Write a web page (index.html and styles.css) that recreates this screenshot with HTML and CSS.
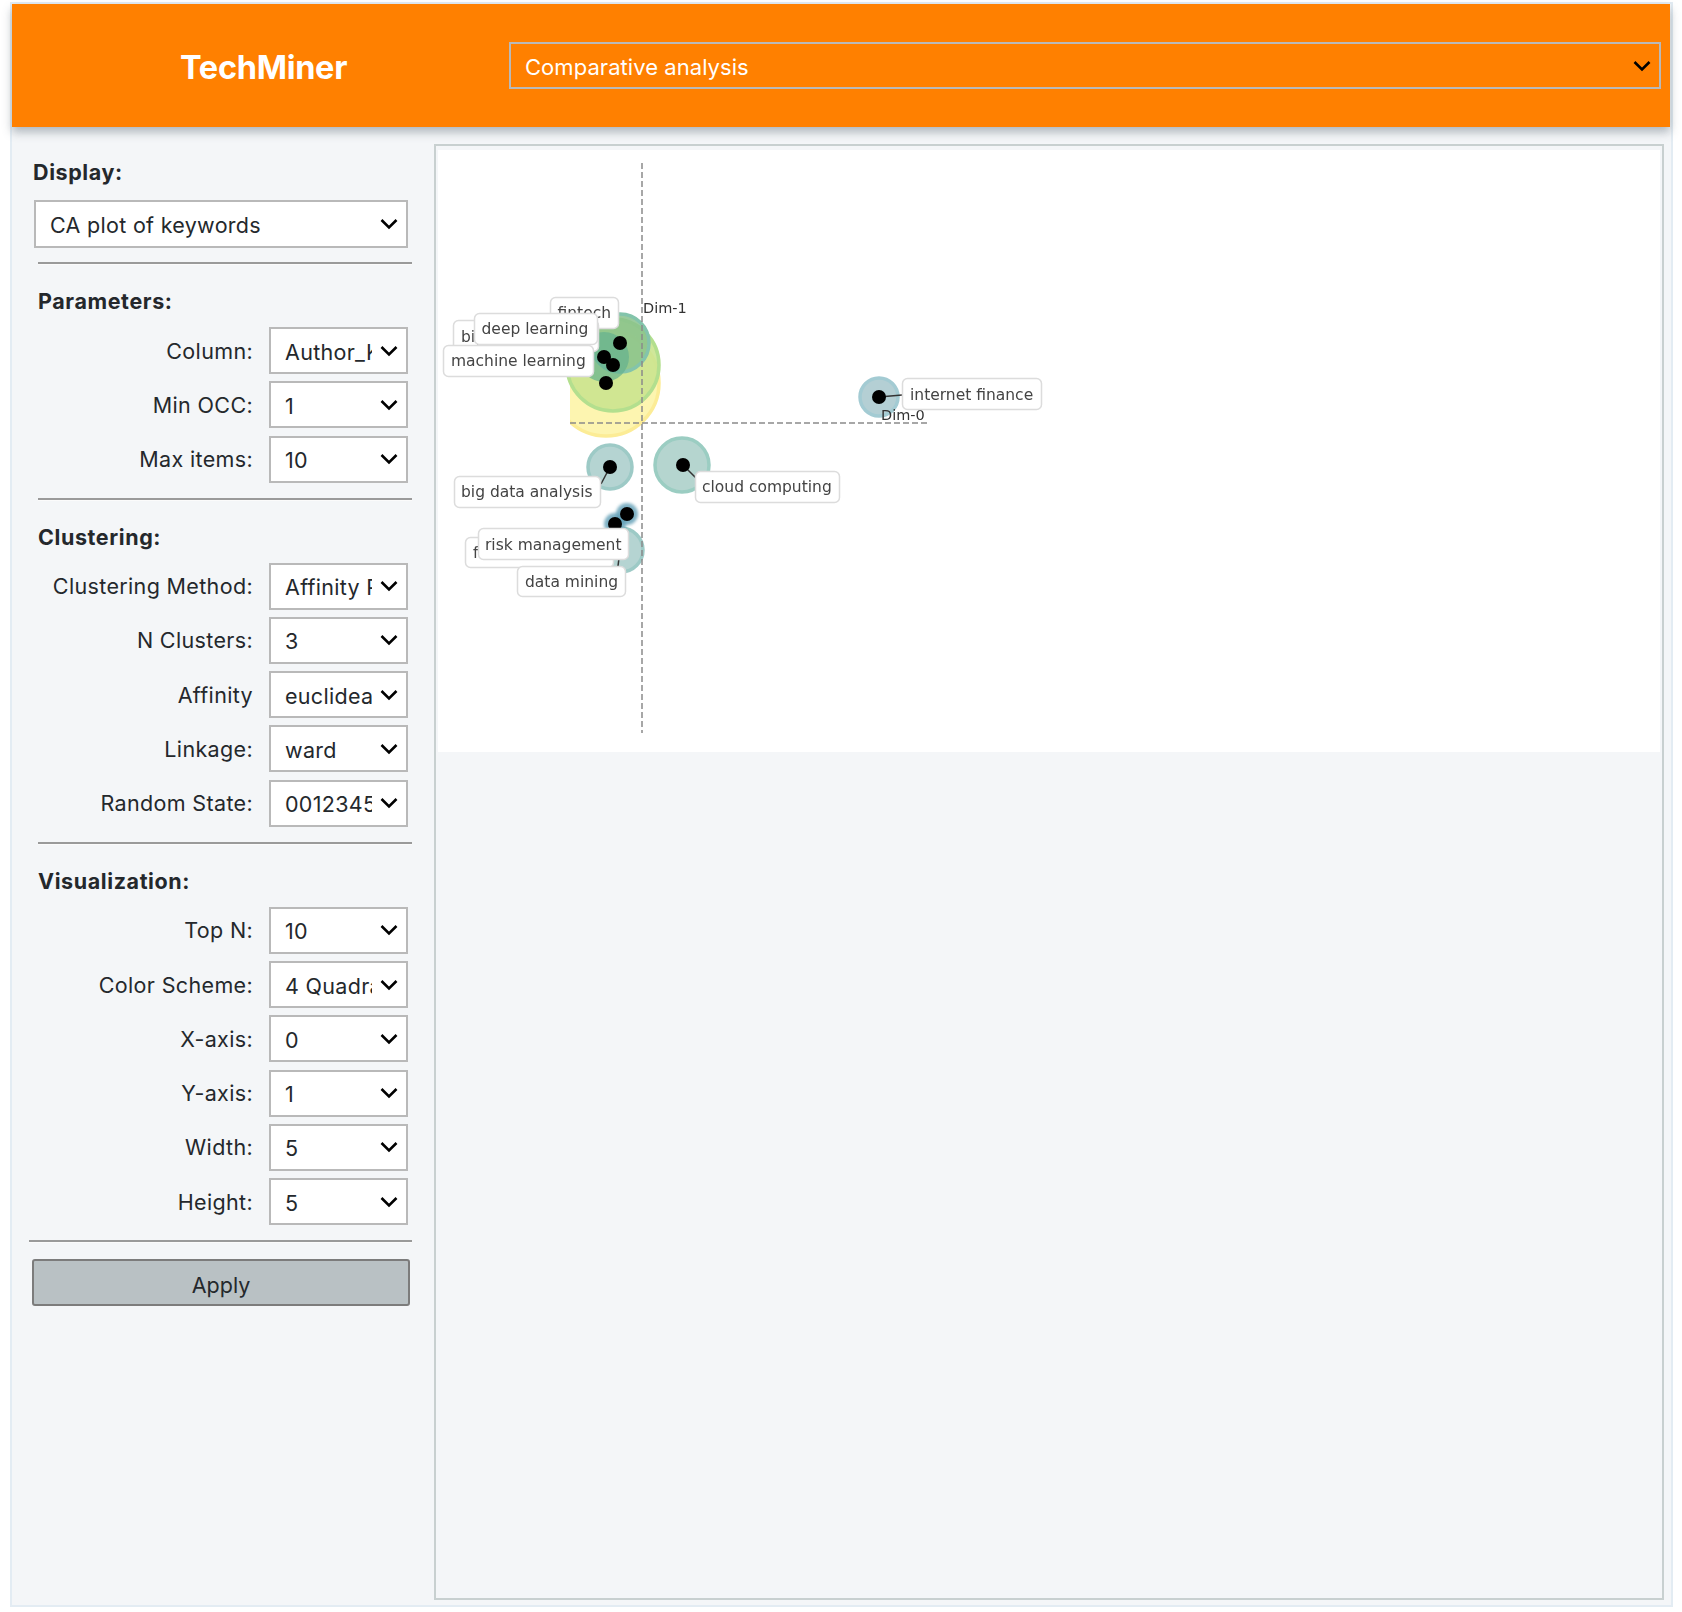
FILE: index.html
```html
<!DOCTYPE html>
<html lang="en">
<head>
  <meta charset="UTF-8" />
  <title>TechMiner</title>
  <link rel="stylesheet" href="styles.css">
</head>
<body>
  <div class="frame">
    <header class="topbar">
      <div class="brand">TechMiner</div>
      <select class="app-select">
        <option>Comparative analysis</option>
      </select>
    </header>

    <div class="content">
      <aside class="sidebar">
        <div class="display-label">Display:</div>
        <select class="display-select">
          <option>CA plot of keywords</option>
        </select>
        <hr class="rule" />

        <div class="section-title">Parameters:</div>
        <div class="fields">
          <label class="field"><span>Column:</span><select><option>Author_Keywords</option></select></label>
          <label class="field"><span>Min OCC:</span><select><option>1</option></select></label>
          <label class="field"><span>Max items:</span><select><option>10</option></select></label>
        </div>
        <hr class="rule" />

        <div class="section-title">Clustering:</div>
        <div class="fields">
          <label class="field"><span>Clustering Method:</span><select><option>Affinity Propagation</option></select></label>
          <label class="field"><span>N Clusters:</span><select><option>3</option></select></label>
          <label class="field"><span>Affinity</span><select><option>euclidean</option></select></label>
          <label class="field"><span>Linkage:</span><select><option>ward</option></select></label>
          <label class="field"><span>Random State:</span><select><option>0012345678</option></select></label>
        </div>
        <hr class="rule" />

        <div class="section-title">Visualization:</div>
        <div class="fields">
          <label class="field"><span>Top N:</span><select><option>10</option></select></label>
          <label class="field"><span>Color Scheme:</span><select><option>4 Quadrants</option></select></label>
          <label class="field"><span>X-axis:</span><select><option>0</option></select></label>
          <label class="field"><span>Y-axis:</span><select><option>1</option></select></label>
          <label class="field"><span>Width:</span><select><option>5</option></select></label>
          <label class="field"><span>Height:</span><select><option>5</option></select></label>
        </div>
        <hr class="rule rule-wide" />

        <button class="apply">Apply</button>
      </aside>

      <main class="output">
        <div class="plot">
          <!-- viewBox is the page area of the plot, so coordinates read like the picture -->
          <svg class="plot-svg" viewBox="438 150 1222 602" width="1222" height="602">
            <defs>
              <clipPath id="axes"><rect x="570" y="150" width="1090" height="602" /></clipPath>
            </defs>

            <g clip-path="url(#axes)">
              <circle cx="606" cy="383" r="53" fill="#fdf5b0" stroke="#fcec96" stroke-width="3.5" />
            </g>
            <circle cx="613" cy="365" r="46" fill="#cbe48f" fill-opacity="0.9" stroke="#b3df8e" stroke-width="3.5" />
            <circle cx="620" cy="343" r="29" fill="#88c28c" fill-opacity="0.85" stroke="#83c4ab" stroke-width="3.5" />
            <circle cx="604" cy="357" r="25" fill="#64b08e" fill-opacity="0.7" />

            <circle cx="682" cy="465" r="27" fill="#b5d5cf" stroke="#9bcdc2" stroke-width="3.5" />
            <circle cx="879" cy="397" r="19" fill="#b4cfd4" stroke="#a3cbd3" stroke-width="3.5" />
            <circle cx="610" cy="467" r="22" fill="#b5d4d2" stroke="#9dcac6" stroke-width="3.5" />
            <circle cx="621" cy="550" r="22" fill="#b5d4d2" stroke="#9dcac6" stroke-width="3.5" />
            <circle class="halo" cx="627" cy="514" r="11" />
            <circle class="halo" cx="615" cy="524" r="11" />

            <g class="axis">
              <line x1="642" y1="163" x2="642" y2="733" />
              <line x1="570" y1="423" x2="927" y2="423" />
            </g>

            <g class="leaders">
              <line x1="610" y1="467" x2="601" y2="484" />
              <line x1="683" y1="465" x2="697" y2="479" />
              <line x1="879" y1="397" x2="902" y2="395" />
              <line x1="620" y1="550" x2="618" y2="566" />
            </g>

            <g class="dots">
              <circle cx="620" cy="343" r="7" />
              <circle cx="604" cy="357" r="7" />
              <circle cx="613" cy="365" r="7" />
              <circle cx="606" cy="383" r="7" />
              <circle cx="610" cy="467" r="7" />
              <circle cx="683" cy="465" r="7" />
              <circle cx="879" cy="397" r="7" />
              <circle cx="627" cy="514" r="7" />
              <circle cx="615" cy="524" r="7" />
            </g>

            <text class="dim" x="643" y="313">Dim-1</text>
            <text class="dim" x="881" y="420">Dim-0</text>

            <g class="tag"><rect x="550.5" y="297.5" width="68" height="31" rx="5" /><text x="557.5" y="318">fintech</text></g>
            <g class="tag"><rect x="453.5" y="320.5" width="145" height="31" rx="5" /><text x="461" y="342">big data</text></g>
            <g class="tag"><rect x="474.5" y="313.5" width="123" height="31" rx="5" /><text x="481.5" y="334">deep learning</text></g>
            <g class="tag"><rect x="443.5" y="345.5" width="150" height="31" rx="5" /><text x="451" y="366">machine learning</text></g>
            <g class="tag"><rect x="902.5" y="378.5" width="139" height="31" rx="5" /><text x="910" y="400">internet finance</text></g>
            <g class="tag"><rect x="695.5" y="471.5" width="144" height="31" rx="5" /><text x="702" y="492">cloud computing</text></g>
            <g class="tag"><rect x="454.5" y="476.5" width="146" height="31" rx="5" /><text x="461" y="497">big data analysis</text></g>
            <g class="tag"><rect x="465.5" y="537.5" width="148" height="30" rx="5" /><text x="473" y="558">financial</text></g>
            <g class="tag"><rect x="478.5" y="528.5" width="150" height="31" rx="5" /><text x="485" y="550">risk management</text></g>
            <g class="tag"><rect x="517.5" y="566.5" width="108" height="30" rx="5" /><text x="525" y="587">data mining</text></g>
          </svg>
        </div>
      </main>
    </div>
  </div>
</body>
</html>
```

FILE: styles.css
```css
* {
  box-sizing: border-box;
}

body {
  margin: 0;
  background: #fff;
  font-family: Inter, "Liberation Sans", sans-serif;
  color: #24282c;
}

.frame {
  width: 1663px;
  height: 1605px;
  margin: 2px 0 0 10px;
  border: 2px solid #e3ecf3;
  background: #f4f6f8;
  display: flex;
  flex-direction: column;
}

.topbar {
  height: 123px;
  flex-shrink: 0;
  background: #ff8000;
  box-shadow: 0 5px 9px rgba(90, 105, 115, 0.45);
  display: flex;
  align-items: center;
  position: relative;
  margin-right: 1px;
  padding-left: 168px;
  padding-right: 9px;
}

.brand {
  width: 329px;
  margin-top: 3px;
  color: #fff;
  font-size: 32.5px;
  font-weight: 700;
  letter-spacing: -0.3px;
}

select {
  appearance: none;
  -webkit-appearance: none;
  border: 2px solid #b9b9b9;
  border-radius: 0;
  background-color: #fff;
  background-image: url("data:image/svg+xml,%3Csvg xmlns='http://www.w3.org/2000/svg' width='18' height='12' viewBox='0 0 18 12'%3E%3Cpath d='M1.5 2 L9 9.5 L16.5 2' fill='none' stroke='%23000' stroke-width='2.6'/%3E%3C/svg%3E");
  background-repeat: no-repeat;
  background-position: right 8px center;
  font-family: inherit;
  font-size: 21.5px;
  color: #24282c;
  letter-spacing: 0.3px;
  padding: 2px 34px 0 14px;
  outline: none;
}

.app-select {
  flex: 1;
  height: 47px;
  background-color: transparent;
  color: #fff;
  font-size: 22px;
  letter-spacing: 0.05px;
}

.content {
  flex: 1;
  display: flex;
  min-height: 0;
}

.sidebar {
  width: 422px;
  flex-shrink: 0;
  padding: 33px 0 0 22px;
}

.display-label {
  height: 25px;
  line-height: 25px;
  font-size: 21.5px;
  font-weight: 700;
  letter-spacing: 0.6px;
  margin-left: -1px;
}

.display-select {
  display: block;
  width: 374px;
  height: 48px;
  margin-top: 15px;
}

.rule {
  width: 374px;
  height: 3px;
  margin: 14px 0 0 4px;
  border: 0;
  border-top: 2px solid #9a9a9a;
  background: #fbfbfb;
}

.fields + .rule {
  margin-top: 15px;
}

.rule-wide {
  width: 383px;
  margin-left: -5px;
}

.section-title {
  height: 25px;
  line-height: 25px;
  margin: 24px 0 13px 4px;
  font-size: 21.5px;
  font-weight: 700;
  letter-spacing: 0.6px;
}

.fields {
  display: flex;
  flex-direction: column;
  gap: 7.3px;
}

.field {
  display: flex;
  align-items: center;
  justify-content: flex-end;
  width: 374px;
  height: 47px;
  font-size: 21.5px;
  letter-spacing: 0.35px;
}

.field span {
  margin-right: 16px;
}

.field select {
  width: 139px;
  height: 47px;
}

.apply {
  display: block;
  width: 378px;
  height: 47px;
  margin: 16px 0 0 -2px;
  border: 2px solid #7c7c7c;
  border-radius: 3px;
  background: #b9c1c4;
  font-family: inherit;
  font-size: 21.5px;
  color: #24282c;
  padding: 4px 0 0;
}

.output {
  width: 1230px;
  height: 1456px;
  margin-top: 17px;
  border: 2px solid #c8d0d0;
  padding: 4px 2px 0;
}

.plot {
  background: #fff;
  height: 602px;
}

.plot-svg {
  display: block;
  filter: blur(0.6px);
}

.halo {
  fill: #5f9db5;
  fill-opacity: 0.8;
  filter: blur(1.5px);
}

.axis line {
  stroke: #8a8a8a;
  stroke-width: 1.5;
  stroke-dasharray: 6 3;
}

.leaders line {
  stroke: #333;
  stroke-width: 1.5;
}

.dots circle {
  fill: #000;
}

.dim {
  font-family: "DejaVu Sans", sans-serif;
  font-size: 14.5px;
  fill: #333;
}

.tag rect {
  fill: #fff;
  stroke: #dcdcdc;
  stroke-width: 1.5;
}

.tag text {
  font-family: "DejaVu Sans", sans-serif;
  font-size: 15.5px;
  fill: #444;
}
```
